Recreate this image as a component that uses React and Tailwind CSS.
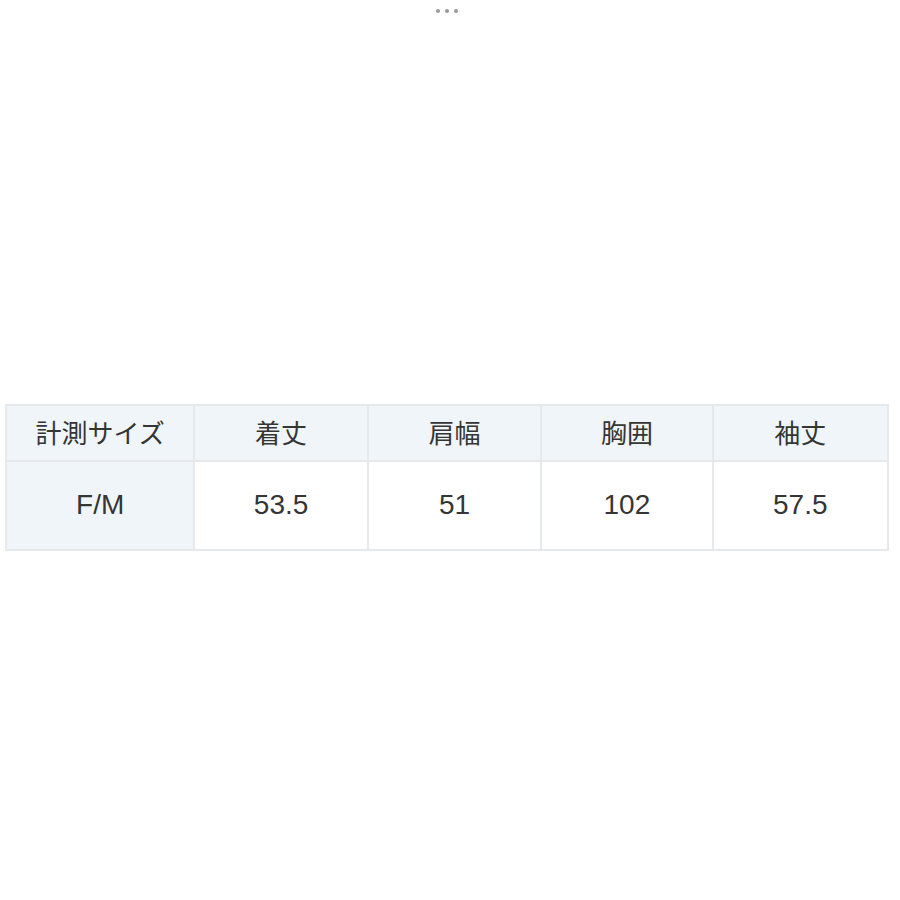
export default function App() {
  const headers = ["計測サイズ", "着丈", "肩幅", "胸囲", "袖丈"];
  const values = ["F/M", "53.5", "51", "102", "57.5"];
  const widths = ["w-[189px]", "w-[174px]", "w-[174px]", "w-[172px]", "w-[174px]"];
  const font = { fontFamily: '"Liberation Sans", "Noto Sans CJK JP", sans-serif' };
  return (
    <div className="w-[900px] h-[900px] bg-white relative" style={font}>
      <div className="flex justify-center gap-[5px] pt-[9px] pr-[6px]">
        <span className="w-[4px] h-[4px] rounded-full bg-[#9a9a9a]" />
        <span className="w-[4px] h-[4px] rounded-full bg-[#9a9a9a]" />
        <span className="w-[4px] h-[4px] rounded-full bg-[#9a9a9a]" />
      </div>
      <div className="mt-[391px] ml-[5px] w-[884px] border-2 border-[#e6e9eb]">
        <div className="flex h-[56px] bg-[#eff5f8] border-b-2 border-[#e6e9eb]">
          {headers.map((h, i) => (
            <div
              key={i}
              className={`${widths[i]} flex items-center justify-center text-[26px] text-[#353535] ${i < 4 ? "border-r-2 border-[#e6e9eb]" : ""}`}
              style={{ fontFamily: '"Noto Sans CJK JP", sans-serif' }}
            >
              <span className="relative top-[-2px]">{h}</span>
            </div>
          ))}
        </div>
        <div className="flex h-[87px]">
          {values.map((v, i) => (
            <div
              key={i}
              className={`${widths[i]} flex items-center justify-center text-[28px] text-[#353535] ${i === 0 ? "bg-[#eff5f8]" : "bg-white"} ${i < 4 ? "border-r-2 border-[#e6e9eb]" : ""}`}
            >
              <span className="relative top-[-1px]">{v}</span>
            </div>
          ))}
        </div>
      </div>
    </div>
  );
}
